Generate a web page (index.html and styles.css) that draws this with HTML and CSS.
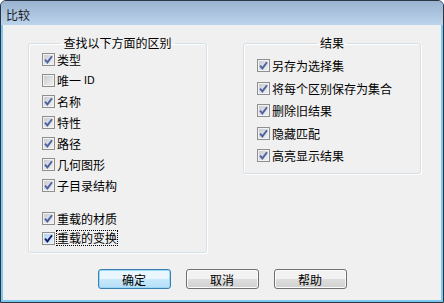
FILE: index.html
```html
<!DOCTYPE html>
<html lang="zh-CN">
<head>
  <meta charset="UTF-8">
  <title>比较</title>
  <link rel="stylesheet" href="styles.css">
</head>
<body>
  <div class="window">
    <div class="titlebar">比较</div>
    <div class="client">
      <div class="groups">
        <fieldset class="group group-find">
          <legend>查找以下方面的区别</legend>
          <label class="check"><span class="box"><svg viewBox="0 0 9 9"><path d="M1 4.6 L3.4 7.4 L8 1.2"/></svg></span>类型</label>
          <label class="check"><span class="box"></span>唯一<span class="latin">ID</span></label>
          <label class="check"><span class="box"><svg viewBox="0 0 9 9"><path d="M1 4.6 L3.4 7.4 L8 1.2"/></svg></span>名称</label>
          <label class="check"><span class="box"><svg viewBox="0 0 9 9"><path d="M1 4.6 L3.4 7.4 L8 1.2"/></svg></span>特性</label>
          <label class="check"><span class="box"><svg viewBox="0 0 9 9"><path d="M1 4.6 L3.4 7.4 L8 1.2"/></svg></span>路径</label>
          <label class="check"><span class="box"><svg viewBox="0 0 9 9"><path d="M1 4.6 L3.4 7.4 L8 1.2"/></svg></span>几何图形</label>
          <label class="check"><span class="box"><svg viewBox="0 0 9 9"><path d="M1 4.6 L3.4 7.4 L8 1.2"/></svg></span>子目录结构</label>
          <div class="spacer"></div>
          <label class="check short"><span class="box"><svg viewBox="0 0 9 9"><path d="M1 4.6 L3.4 7.4 L8 1.2"/></svg></span>重载的材质</label>
          <label class="check short"><span class="box focus"><svg viewBox="0 0 9 9"><path d="M1 4.6 L3.4 7.4 L8 1.2"/></svg></span><span class="focus-text">重载的变换</span></label>
        </fieldset>

        <fieldset class="group group-result">
          <legend>结果</legend>
          <label class="check"><span class="box"><svg viewBox="0 0 9 9"><path d="M1 4.6 L3.4 7.4 L8 1.2"/></svg></span>另存为选择集</label>
          <label class="check"><span class="box"><svg viewBox="0 0 9 9"><path d="M1 4.6 L3.4 7.4 L8 1.2"/></svg></span>将每个区别保存为集合</label>
          <label class="check"><span class="box"><svg viewBox="0 0 9 9"><path d="M1 4.6 L3.4 7.4 L8 1.2"/></svg></span>删除旧结果</label>
          <label class="check"><span class="box"><svg viewBox="0 0 9 9"><path d="M1 4.6 L3.4 7.4 L8 1.2"/></svg></span>隐藏匹配</label>
          <label class="check"><span class="box"><svg viewBox="0 0 9 9"><path d="M1 4.6 L3.4 7.4 L8 1.2"/></svg></span>高亮显示结果</label>
        </fieldset>
      </div>

      <div class="buttons">
        <button class="btn default">确定</button>
        <button class="btn">取消</button>
        <button class="btn">帮助</button>
      </div>
    </div>
  </div>
</body>
</html>
```

FILE: styles.css
```css
body {
  margin: 0;
  font-family: "Noto Sans CJK SC", "Liberation Sans", sans-serif;
  font-size: 12px;
  color: #000;
}
.window {
  width: 444px;
  height: 303px;
  box-sizing: border-box;
  border: 1px solid #2b3644;
  border-radius: 6px 6px 0 0;
  background: #7cc8ee;
  display: flex;
  flex-direction: column;
  overflow: hidden;
}
.titlebar {
  height: 24px;
  box-sizing: border-box;
  padding: 4px 0 0 5px;
  line-height: 20px;
  color: #1e1e1e;
  background: linear-gradient(#9ab3d0, #bcd3ec);
}
.client {
  flex: 1;
  margin: 0 2px 2px;
  background: #f0f0f0;
  padding-top: 12px;
}
.groups {
  display: flex;
  align-items: flex-start;
  gap: 36px;
  padding-left: 25px;
}
.group {
  margin: 0;
  padding: 0;
  border: 1px solid #d5dfe5;
  border-radius: 3px;
  box-shadow: inset 1px 1px 0 #fff, 1px 1px 0 #fff;
}
.group legend {
  margin: 0 auto;
  padding: 0 3px;
  line-height: 12px;
}
.group-find {
  width: 179px;
  box-sizing: border-box;
  padding-bottom: 4px;
}
.group-result {
  width: 178px;
  box-sizing: border-box;
  padding: 5.5px 0 6px;
}
.check {
  display: flex;
  align-items: center;
  gap: 2px;
  margin-left: 13px;
  height: 21px;
  white-space: nowrap;
}
.check.short {
  height: 20px;
}
.group-result .check {
  height: 22.5px;
}
.spacer {
  height: 12px;
}
.latin {
  font-family: "DejaVu Sans", sans-serif;
  font-size: 10px;
  margin-left: 1px;
}
.box {
  width: 13px;
  height: 13px;
  box-sizing: border-box;
  border: 1px solid #8e8f8f;
  background: linear-gradient(135deg, #c4c8ce, #f4f4f5);
  box-shadow: inset 0 0 0 1px #f2f2f2;
  display: flex;
  align-items: center;
  justify-content: center;
  flex: none;
}
.box svg {
  width: 9px;
  height: 9px;
}
.box path {
  fill: none;
  stroke: #4f62a0;
  stroke-width: 1.9;
}
.box.focus {
  background: linear-gradient(135deg, #a9d2f0, #e6f4fd);
}
.box.focus path {
  stroke: #17196b;
}
.focus-text {
  outline: 1px dotted #000;
  line-height: 14px;
}
.buttons {
  display: flex;
  justify-content: center;
  gap: 15px;
  margin-top: 16px;
}
.btn {
  width: 73px;
  height: 20px;
  padding: 0;
  font: inherit;
  color: #000;
  border: 1px solid #707070;
  border-radius: 3px;
  background: linear-gradient(#f2f2f2 50%, #dedede 50%, #d0d0d0);
  box-shadow: inset 0 0 0 1px #fbfbfb;
}
.btn.default {
  border-color: #3c7fb1;
  background: linear-gradient(#eaf6fd 50%, #c9e9fb 50%, #b5def6);
  box-shadow: inset 0 0 0 1px #9ad8f8;
}
```
